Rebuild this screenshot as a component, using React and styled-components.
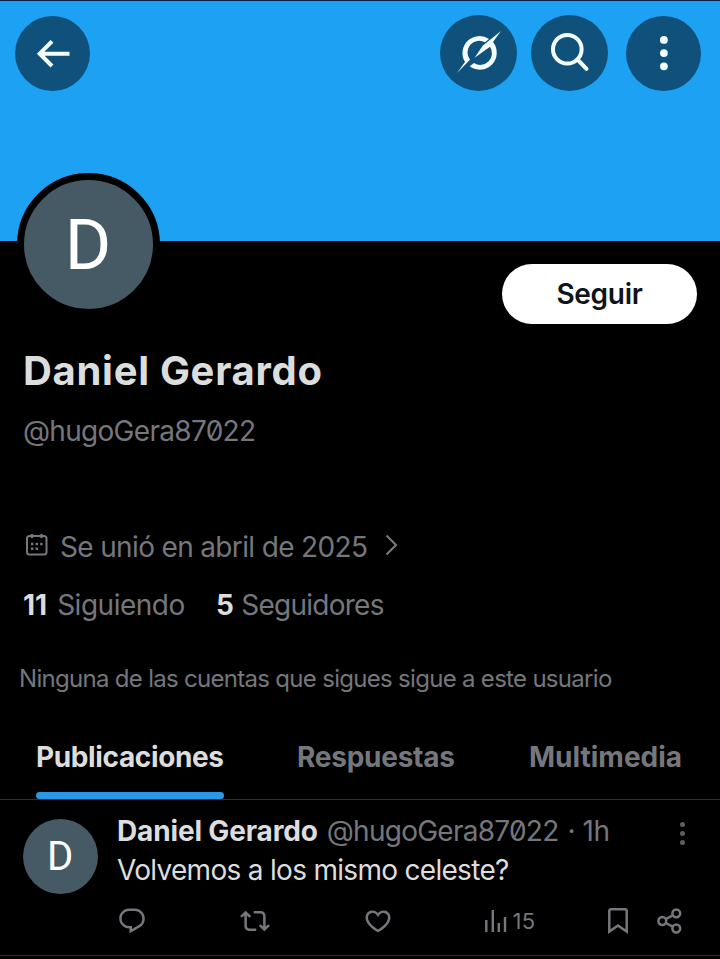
import React from "react";
import styled, { createGlobalStyle } from "styled-components";

const GlobalStyle = createGlobalStyle`
  * {
    box-sizing: border-box;
  }
  body {
    margin: 0;
    background: #000;
    font-family: Inter, "Liberation Sans", sans-serif;
    overflow: hidden;
  }
  svg {
    display: block;
    flex: none;
    overflow: visible;
  }
`

const Screen = styled.div`
  width: 720px;
  height: 959px;
  background: #000;
  color: #dcdddd;
  overflow: hidden;
`

const Banner = styled.header`
  display: flex;
  align-items: flex-start;
  height: 241px;
  padding: 14px 19px 0 15px;
  border-top: 1px solid #0b1c4c;
  background: #1da1f2;
`

const BannerActions = styled.div`
  display: flex;
  margin-left: auto;
`

const RoundButton = styled.button`
  display: flex;
  align-items: center;
  justify-content: center;
  width: ${props => props.$size}px;
  height: ${props => Math.min(props.$size, 76)}px;
  margin: ${props => props.$size === 75 ? "1px 0 0" : "0"};
  margin-right: ${props => props.$gap || 0}px;
  padding: ${props => props.$size === 75 ? "0" : "0 0 2px"};
  border: 0;
  border-radius: 50%;
  background: #0f517a;
  color: #f5ffff;
`

const ProfileTop = styled.div`
  display: flex;
  justify-content: space-between;
  align-items: flex-start;
  height: 105px;
  padding: 0 23px 0 17px;
`

const Avatar = styled.div`
  display: flex;
  align-items: center;
  justify-content: center;
  flex: none;
  width: ${props => props.$size}px;
  height: ${props => props.$size}px;
  padding-right: 1px;
  border: ${props => props.$ring || 0}px solid #000;
  border-radius: 50%;
  background: #465a65;
  color: #fff;
  font-family: Roboto, sans-serif;
  font-size: ${props => props.$letter}px;
  line-height: 1;
`

const ProfileAvatar = styled(Avatar)`
  margin-top: -68px;
`

const FollowButton = styled.button`
  width: 195px;
  height: 60px;
  margin-top: 23px;
  padding: 0;
  border: 0;
  border-radius: 30px;
  background: #fff;
  color: #0f1419;
  font: 600 28px/60px Inter, sans-serif;
  letter-spacing: -0.3px;
`

const Name = styled.h1`
  margin: 0;
  padding-left: 23px;
  font-size: 40px;
  font-weight: 700;
  line-height: 50px;
  letter-spacing: 0.7px;
`

const Text = styled.span`
  color: ${props => props.$muted ? "#75777c" : "#dcdddd"};
  font-size: ${props => props.$size || 28}px;
  font-weight: ${props => props.$bold ? 700 : 400};
  line-height: 40px;
  letter-spacing: ${props => props.$track || 0}px;
  white-space: pre;
`

const Handle = styled(Text)`
  font-feature-settings: "zero";
`

const ProfileHandle = styled.div`
  display: flex;
  height: 40px;
  margin-top: 15px;
  padding-left: 23px;
`

const Joined = styled.div`
  display: flex;
  height: 40px;
  margin-top: 76px;
  padding-left: 25px;
  color: #75777c;

  svg:first-child {
    margin: 6px 12px 0 0;
  }
  svg:last-child {
    margin: 7px 0 0 18px;
  }
`

const Counts = styled.div`
  display: flex;
  height: 40px;
  margin-top: 18px;
  padding-left: 23px;
`

const Count = styled.div`
  display: flex;
  gap: ${props => props.$gap}px;
  width: ${props => props.$width}px;
`

const Mutuals = styled.div`
  height: 40px;
  margin-top: 34px;
  padding-left: 19px;
`

const Tabs = styled.nav`
  display: flex;
  height: 101px;
  padding: 38px 0 0 36px;
  border-bottom: 1px solid #2f3133;
`

const Tab = styled.div`
  display: flex;
  flex-direction: column;
  justify-content: space-between;
  width: ${props => props.$width}px;
  margin-right: ${props => props.$gap || 0}px;
`

const Indicator = styled.div`
  height: 7px;
  border-radius: 4px;
  background: #2b98e6;
`

const Post = styled.article`
  display: flex;
  height: 156px;
  padding: 11px 0 0 23px;
  border-bottom: 1px solid #2f3133;
`

const PostAvatar = styled(Avatar)`
  margin: 8px 19px 0 0;
`

const PostBody = styled.div`
  flex: 1;
`

const PostHeader = styled.div`
  display: flex;
  gap: 9px;
  height: 39px;
  padding-right: 35px;
  color: #5c5e62;

  svg {
    margin: 11px 0 0 auto;
  }
`

const PostText = styled.div`
  height: 40px;
`

const Actions = styled.div`
  display: flex;
  align-items: center;
  height: 62px;
  color: #75777c;
`

const Action = styled.div`
  display: flex;
  align-items: center;
  gap: 6px;
  width: ${props => props.$width}px;
`

const BackIcon = () => (
  <svg width="34" height="28" viewBox="0 0 34 28" fill="none" stroke="currentColor" strokeWidth="4">
    <path d="M33.5 13.7H4M16 1.4L3.7 13.7L16 26" />
  </svg>
)

const GrokIcon = () => (
  <svg width="44" height="42" viewBox="0 0 132 126" fill="currentColor">
    <path d="M0 126L24 93A51 51 0 0 1 96 24L84 34A35 35 0 0 0 39 86Z" />
    <path d="M132 0L77 44L53 80L99 47A35 35 0 0 1 51 96L38 106A51 51 0 0 0 108 33Z" />
  </svg>
)

const SearchIcon = () => (
  <svg width="38" height="38" viewBox="0 0 38 38" fill="none" stroke="currentColor" strokeWidth="4">
    <circle cx="16.3" cy="16.3" r="14.3" />
    <path d="M26.5 26.5L35.5 35.8" strokeLinecap="round" />
  </svg>
)

const MoreIcon = ({ r, gap }) => (
  <svg width={r * 2} height={r * 2 + gap * 2} fill="currentColor">
    <circle cx={r} cy={r} r={r} />
    <circle cx={r} cy={r + gap} r={r} />
    <circle cx={r} cy={r + gap * 2} r={r} />
  </svg>
)

const CalendarIcon = () => (
  <svg width="23" height="23" viewBox="0 0 23 23" fill="none" stroke="currentColor" strokeWidth="2">
    <rect x="2" y="3" width="19.5" height="18.5" rx="2.5" />
    <path d="M7 1v4M16.5 1v4" strokeWidth="2.5" />
    <path d="M6 11h2.4M10.6 11H13M15.2 11h2.4M6 15.7h2.4M10.6 15.7H13" strokeWidth="2.4" />
  </svg>
)

const ChevronIcon = () => (
  <svg width="13" height="22" viewBox="0 0 13 22" fill="none" stroke="currentColor" strokeWidth="2.2">
    <path d="M1.5 1.5L11 11l-9.5 9.5" />
  </svg>
)

const ReplyIcon = () => (
  <svg width="30" height="30" viewBox="0 0 24 24" fill="currentColor">
    <path d="M1.751 10c0-4.42 3.584-8 8.005-8h4.366c4.49 0 8.129 3.64 8.129 8.13 0 2.96-1.607 5.68-4.196 7.11l-8.054 4.46v-3.69h-.067c-4.49.1-8.183-3.51-8.183-8.01zm8.005-6c-3.317 0-6.005 2.69-6.005 6 0 3.37 2.77 6.08 6.138 6.01l.351-.01h1.761v2.3l5.087-2.81c1.951-1.08 3.163-3.13 3.163-5.36 0-3.39-2.744-6.13-6.129-6.13H9.756z" />
  </svg>
)

const RepostIcon = () => (
  <svg width="30" height="30" viewBox="0 0 24 24" fill="currentColor">
    <path d="M4.5 3.88l4.432 4.14-1.364 1.46L5.5 7.55V16c0 1.1.896 2 2 2H13v2H7.5c-2.209 0-4-1.79-4-4V7.55L1.432 9.48.068 8.02 4.5 3.88zM16.5 6H11V4h5.5c2.209 0 4 1.79 4 4v8.45l2.068-1.93 1.364 1.46-4.432 4.14-4.432-4.14 1.364-1.46 2.068 1.93V8c0-1.1-.896-2-2-2z" />
  </svg>
)

const LikeIcon = () => (
  <svg width="30" height="30" viewBox="0 0 24 24" fill="currentColor">
    <path d="M16.697 5.5c-1.222-.06-2.679.51-3.89 2.16l-.805 1.09-.806-1.09C9.984 6.01 8.526 5.44 7.304 5.5c-1.243.07-2.349.78-2.91 1.91-.552 1.12-.633 2.78.479 4.82 1.074 1.97 3.257 4.27 7.129 6.61 3.87-2.34 6.052-4.64 7.126-6.61 1.111-2.04 1.03-3.7.477-4.82-.561-1.13-1.666-1.84-2.908-1.91zm4.187 7.69c-1.351 2.48-4.001 5.12-8.379 7.67l-.503.3-.504-.3c-4.379-2.55-7.029-5.19-8.382-7.67-1.36-2.5-1.41-4.86-.514-6.67.887-1.79 2.647-2.91 4.601-3.01 1.651-.09 3.368.56 4.798 2.01 1.429-1.45 3.146-2.1 4.796-2.01 1.954.1 3.714 1.22 4.601 3.01.896 1.81.846 4.17-.514 6.67z" />
  </svg>
)

const ViewsIcon = () => (
  <svg width="22" height="22" viewBox="0 0 22 22" fill="none" stroke="currentColor" strokeWidth="2.4">
    <path d="M1.3 22V10M7.8 22V0M13.8 22V13M20 22V7" />
  </svg>
)

const BookmarkIcon = () => (
  <svg width="20" height="26" viewBox="0 0 20 26" fill="none" stroke="currentColor" strokeWidth="2.5">
    <path d="M1.3 23.6V3q0-1.700 1.700-1.700h14q1.700 0 1.700 1.700v20.600L10 17.500z" />
  </svg>
)

const ShareIcon = () => (
  <svg width="25" height="26" viewBox="0 0 25 26" fill="none" stroke="currentColor" strokeWidth="2.5">
    <circle cx="5.3" cy="13" r="3.9" />
    <circle cx="19.3" cy="5.3" r="3.9" />
    <circle cx="19.3" cy="20.5" r="3.9" />
    <path d="M9 11l6.7-3.7M9 15l6.7 3.6" />
  </svg>
)

export default function App() {
  return (
    <Screen>
      <GlobalStyle />
      <Banner>
        <RoundButton $size={75}><BackIcon /></RoundButton>
        <BannerActions>
          <RoundButton $size={77} $gap={14}><GrokIcon /></RoundButton>
          <RoundButton $size={77} $gap={18}><SearchIcon /></RoundButton>
          <RoundButton $size={75}><MoreIcon r={3.9} gap={13.2} /></RoundButton>
        </BannerActions>
      </Banner>

      <ProfileTop>
        <ProfileAvatar $size={143} $ring={7} $letter={71}>D</ProfileAvatar>
        <FollowButton>Seguir</FollowButton>
      </ProfileTop>
      <Name>Daniel Gerardo</Name>
      <ProfileHandle>
        <Handle $muted $track={-0.7}>@hugoGera87022</Handle>
      </ProfileHandle>
      <Joined>
        <CalendarIcon />
        <Text $muted $track={-0.65}>Se unió en abril de 2025</Text>
        <ChevronIcon />
      </Joined>
      <Counts>
        <Count $width={193} $gap={10}>
          <Text $bold $track={0}>11</Text>
          <Text $muted $track={-0.5}>Siguiendo</Text>
        </Count>
        <Count $gap={8}>
          <Text $bold $track={-0.6}>5</Text>
          <Text $muted $track={-0.75}>Seguidores</Text>
        </Count>
      </Counts>
      <Mutuals>
        <Text $muted $size={24} $track={-0.7}>Ninguna de las cuentas que sigues sigue a este usuario</Text>
      </Mutuals>

      <Tabs>
        <Tab $width={188} $gap={73}>
          <Text $bold $track={-0.37}>Publicaciones</Text>
          <Indicator />
        </Tab>
        <Tab $width={158} $gap={74}>
          <Text $bold $muted $track={-0.25}>Respuestas</Text>
        </Tab>
        <Tab $width={155}>
          <Text $bold $muted $track={0}>Multimedia</Text>
        </Tab>
      </Tabs>

      <Post>
        <PostAvatar $size={75} $letter={40}>D</PostAvatar>
        <PostBody>
          <PostHeader>
            <Text $bold $track={-0.15}>Daniel Gerardo</Text>
            <Handle $muted $track={-0.75}>@hugoGera87022</Handle>
            <Text $muted $track={-0.4}>· 1h</Text>
            <MoreIcon r={2.5} gap={9} />
          </PostHeader>
          <PostText>
            <Text $track={-0.7}>Volvemos a los mismo celeste?</Text>
          </PostText>
          <Actions>
            <Action $width={123}><ReplyIcon /></Action>
            <Action $width={122.5}><RepostIcon /></Action>
            <Action $width={122}><LikeIcon /></Action>
            <Action $width={123.5}>
              <ViewsIcon />
              <Text $muted $size={22} $track={0.2}>15</Text>
            </Action>
            <Action $width={49}><BookmarkIcon /></Action>
            <Action><ShareIcon /></Action>
          </Actions>
        </PostBody>
      </Post>
    </Screen>
  );
}
